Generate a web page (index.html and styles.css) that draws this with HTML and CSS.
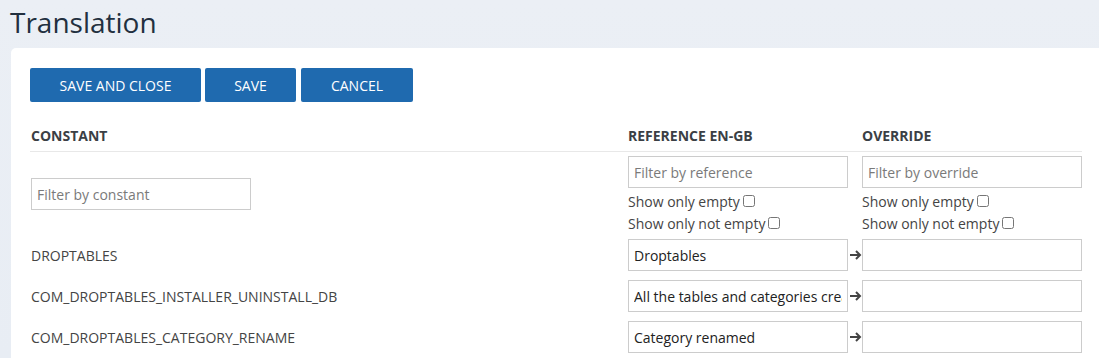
FILE: index.html
```html
<!DOCTYPE html>
<html lang="en">
<head>
    <meta charset="utf-8">
    <meta name="viewport" content="width=device-width, initial-scale=1">
    <title>Translation</title>
    <link rel="stylesheet" href="styles.css">
</head>
<body>
<h1 class="page-title">Translation</h1>

<div class="card">
    <div class="toolbar">
        <button class="btn btn-save-close">Save and close</button>
        <button class="btn btn-save">Save</button>
        <button class="btn btn-cancel">Cancel</button>
    </div>

    <div class="grid head">
        <div>Constant</div>
        <div>Reference en-GB</div>
        <div></div>
        <div>Override</div>
    </div>

    <div class="grid filters">
        <div class="const-filter"><input class="field" type="text" placeholder="Filter by constant"></div>
        <div>
            <input class="field" type="text" placeholder="Filter by reference">
            <label class="check">Show only empty <input type="checkbox"></label>
            <label class="check">Show only not empty <input type="checkbox"></label>
        </div>
        <div></div>
        <div>
            <input class="field" type="text" placeholder="Filter by override">
            <label class="check">Show only empty <input type="checkbox"></label>
            <label class="check">Show only not empty <input type="checkbox"></label>
        </div>
    </div>

    <div class="grid entry">
        <div class="const">DROPTABLES</div>
        <input class="field" type="text" value="Droptables">
        <div class="arrow"><svg width="13" height="10" viewBox="0 0 13 10"><path d="M1 5h10M7 1l4 4-4 4" fill="none" stroke="#444" stroke-width="2"/></svg></div>
        <input class="field" type="text" value="">
    </div>
    <div class="grid entry">
        <div class="const">COM_DROPTABLES_INSTALLER_UNINSTALL_DB</div>
        <input class="field" type="text" value="All the tables and categories created by Droptables will be removed">
        <div class="arrow"><svg width="13" height="10" viewBox="0 0 13 10"><path d="M1 5h10M7 1l4 4-4 4" fill="none" stroke="#444" stroke-width="2"/></svg></div>
        <input class="field" type="text" value="">
    </div>
    <div class="grid entry">
        <div class="const">COM_DROPTABLES_CATEGORY_RENAME</div>
        <input class="field" type="text" value="Category renamed">
        <div class="arrow"><svg width="13" height="10" viewBox="0 0 13 10"><path d="M1 5h10M7 1l4 4-4 4" fill="none" stroke="#444" stroke-width="2"/></svg></div>
        <input class="field" type="text" value="">
    </div>
</div>
</body>
</html>
```

FILE: styles.css
```css
body {
    font-family: 'Open Sans', 'Noto Sans', sans-serif;
    background: linear-gradient(180deg, #ebeff5 0%, #e8edf4 100%);
    margin: 0;
    min-height: 100vh;
    color: #444;
    overflow: hidden;
}

.page-title {
    font-size: 28px;
    font-weight: 400;
    color: #22303f;
    margin: 0;
    padding: 3px 0 0 10px;
    height: 45px;
    line-height: 38px;
}

.card {
    background: white;
    margin-left: 11px;
    border-top-left-radius: 5px;
    padding: 20px 0 0 19px;
    height: 290px;
}

.toolbar {
    display: flex;
}

.btn {
    height: 34px;
    padding: 0;
    background: #1f6aaf;
    color: white;
    border: none;
    border-radius: 2px;
    font-family: inherit;
    font-size: 14px;
    text-transform: uppercase;
    cursor: pointer;
}

.btn-save-close {
    width: 171px;
}

.btn-save {
    width: 91px;
    margin-left: 4px;
}

.btn-cancel {
    width: 112px;
    margin-left: 5px;
}

.grid {
    display: grid;
    grid-template-columns: 598px 220px 14px 220px;
    width: 1052px;
    align-items: center;
}

.head {
    margin-top: 18px;
    height: 31px;
    border-bottom: 1px solid #e8e8e8;
    font-size: 14px;
    font-weight: 700;
    color: #3b3f45;
    text-transform: uppercase;
}

.head div:first-child {
    padding-left: 1px;
}

.filters {
    padding-top: 4px;
    padding-bottom: 1px;
}

.const-filter {
    padding-left: 1px;
    padding-bottom: 2px;
}

.field {
    display: block;
    box-sizing: border-box;
    width: 220px;
    height: 32px;
    border: 1px solid #ccc;
    padding: 0 5px;
    font-family: inherit;
    font-size: 14px;
    color: #222;
    background: white;
    outline: none;
}

.field::placeholder {
    color: #7a7a7a;
}

.check {
    display: flex;
    align-items: center;
    font-size: 14px;
    color: #444;
    height: 22px;
}

.filters .field + .check {
    margin-top: 2px;
}

.check input {
    width: 12px;
    height: 12px;
    margin: 0 0 1px 3px;
}

.entry {
    padding: 4px 0 5px;
}

.const {
    font-size: 14px;
    color: #444;
    padding-left: 1px;
}

.arrow {
    display: flex;
    justify-content: center;
    align-items: center;
}
```
